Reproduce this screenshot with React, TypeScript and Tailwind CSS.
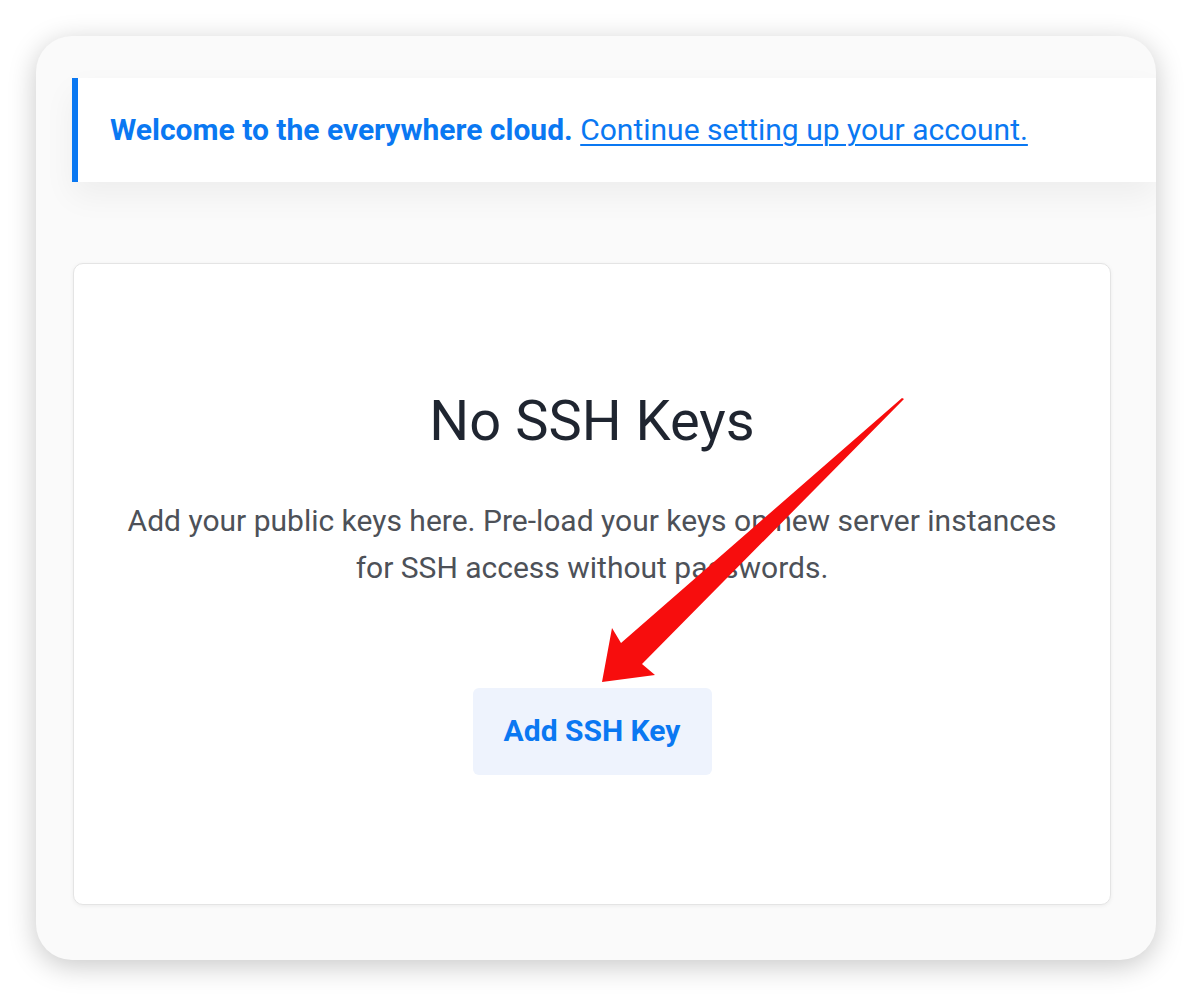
import React from 'react';

const Arrow: React.FC = () => (
  <svg className="absolute inset-0 pointer-events-none" width={1192} height={996} viewBox="0 0 1192 996">
    <path
      d="M904 399 L642 664 L655 675 L602 682 L612 628 L621 643 L902 398 Z"
      fill="#f70d0d"
    />
  </svg>
);

export default function App() {
  return (
    <div className="relative w-[1192px] h-[996px] bg-white p-9 font-['Roboto','Liberation_Sans',sans-serif]">
      {/* Window */}
      <div className="w-[1120px] h-[924px] rounded-[36px] bg-[#fafafa] overflow-hidden shadow-[0_6px_28px_rgba(0,0,0,0.22)] pt-[42px] pl-9">
        {/* Welcome banner */}
        <div className="h-[104px] flex items-center bg-white border-l-[6px] border-[#0a78f2] pl-8 shadow-[0_14px_30px_rgba(0,0,0,0.05)]">
          <p className="text-[30px] leading-none text-[#0a78f2] whitespace-nowrap">
            <span className="font-bold">Welcome to the everywhere cloud.</span>{' '}
            <a href="#" className="underline underline-offset-[4px] decoration-[2px]">Continue setting up your account.</a>
          </p>
        </div>

        {/* Empty state card */}
        <div className="mt-[81px] ml-px w-[1038px] h-[642px] bg-white rounded-[10px] border border-[#e4e4e4] shadow-[0_1px_4px_rgba(0,0,0,0.06)] flex flex-col items-center pt-[124px]">
          <h1 className="text-[56px] leading-[66px] text-[#1f2530] font-normal">No SSH Keys</h1>
          <p className="mt-[43px] w-[945px] text-center text-[30px] leading-[47px] text-[#4d5158]">
            Add your public keys here. Pre-load your keys on new server instances for SSH access without passwords.
          </p>
          <button className="mt-[97px] w-[239px] h-[87px] rounded-[6px] bg-[#eef3fd] text-[#0a78f2] text-[30px] font-bold pb-[3px]">
            Add SSH Key
          </button>
        </div>
      </div>
      <Arrow />
    </div>
  );
}
